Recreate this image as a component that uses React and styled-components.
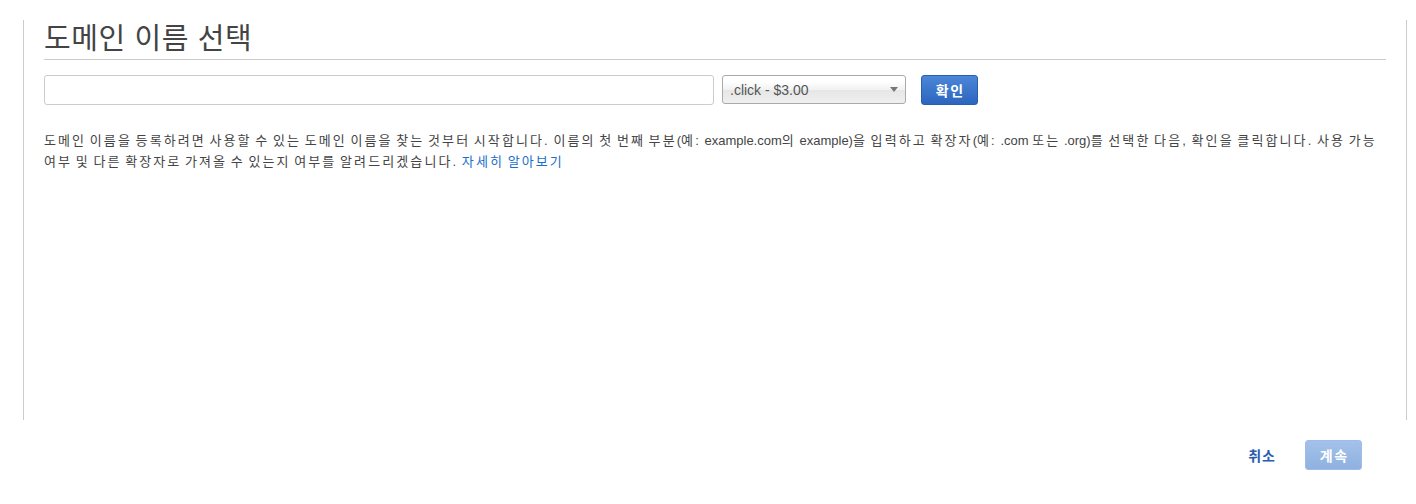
import React from "react";
import styled, { createGlobalStyle } from "styled-components";

const Global = createGlobalStyle`
  html, body { margin: 0; padding: 0; background: #fff; }
  body {
    font-family: Arial, "Liberation Sans", "Noto Sans CJK KR", sans-serif;
    color: #444;
  }
`;

const Page = styled.div`
  width: 1416px;
  height: 504px;
  padding-top: 20px;
  box-sizing: border-box;
`;

const Panel = styled.section`
  margin-left: 23px;
  width: 1384px;
  height: 400px;
  box-sizing: border-box;
  border-left: 1px solid #ccc;
  border-right: 1px solid #ccc;
  padding: 0 20px;
`;

const Title = styled.h1`
  margin: 0;
  font-size: 29px;
  font-weight: normal;
  line-height: 38px;
  letter-spacing: 0.6px;
  color: #444;
  padding-bottom: 1px;
  border-bottom: 1px solid #ccc;
`;

const SearchRow = styled.div`
  display: flex;
  align-items: flex-start;
  margin-top: 15px;
`;

const TextInput = styled.input`
  width: 670px;
  height: 30px;
  box-sizing: border-box;
  border: 1px solid #ccc;
  border-radius: 3px;
  padding: 0 6px;
  font-size: 13px;
  outline: none;
`;

const SelectBox = styled.div`
  position: relative;
  margin-left: 8px;
  width: 184px;
  height: 29px;
  box-sizing: border-box;
  border: 1px solid #aaa;
  border-radius: 3px;
  background: linear-gradient(#fff 20%, #f2f2f2 50%, #e6e6e6 52%, #f0f0f0 100%);
  display: flex;
  align-items: center;
  padding-left: 7px;
  font-size: 14px;
  color: #555;
`;

const Arrow = styled.span`
  position: absolute;
  right: 7px;
  top: 11px;
  width: 0;
  height: 0;
  border-left: 4px solid transparent;
  border-right: 4px solid transparent;
  border-top: 5px solid #777;
`;

const Button = styled.button`
  height: 30px;
  width: 57px;
  box-sizing: border-box;
  border: 1px solid ${(p) => (p.$disabled ? "#9fbde6" : "#2a5eb0")};
  border-radius: 3px;
  background: ${(p) =>
    p.$disabled
      ? "linear-gradient(#a3c2ea, #8fb1e0)"
      : "linear-gradient(#4b86d8, #2c65bf)"};
  color: #fff;
  font-family: Arial, "Liberation Sans", "Noto Sans CJK KR", sans-serif;
  font-size: 14px;
  font-weight: bold;
  letter-spacing: 1.5px;
  text-indent: 1.5px;
  padding: 0;
  margin-left: ${(p) => p.$ml || 0}px;
  cursor: pointer;
`;

const Description = styled.p`
  margin: 25px 0 0;
  font-size: 13px;
  line-height: 21px;
  letter-spacing: 2.1px;
  word-spacing: -2.1px;
  color: #444;
`;

const Latin = styled.span`
  letter-spacing: 0;
`;

const Link = styled.a`
  color: #1a6fc9;
  text-decoration: none;
`;

const Footer = styled.div`
  display: flex;
  justify-content: flex-end;
  align-items: center;
  padding: 20px 54px 0 0;
`;

const TextButton = styled.a`
  color: #2a5db0;
  font-size: 14px;
  font-weight: bold;
  letter-spacing: 1px;
  margin-right: 29px;
  text-decoration: none;
`;

export default function App() {
  return (
    <>
      <Global />
      <Page>
        <Panel>
          <Title>도메인 이름 선택</Title>
          <SearchRow>
            <TextInput type="text" />
            <SelectBox>
              .click - $3.00
              <Arrow />
            </SelectBox>
            <Button $ml={15}>확인</Button>
          </SearchRow>
          <Description>
            도메인 이름을 등록하려면 사용할 수 있는 도메인 이름을 찾는 것부터 시작합니다. 이름의 첫 번째 부분<Latin>(</Latin>예: <Latin>example.com</Latin>의 <Latin>example)</Latin>을 입력하고 확장자<Latin>(</Latin>예: <Latin>.com</Latin> 또는 <Latin>.org)</Latin>를 선택한 다음, 확인을 클릭합니다. 사용 가능 여부 및 다른 확장자로 가져올 수 있는지 여부를 알려드리겠습니다.{" "}
            <Link href="#">자세히 알아보기</Link>
          </Description>
        </Panel>
        <Footer>
          <TextButton href="#">취소</TextButton>
          <Button $disabled>계속</Button>
        </Footer>
      </Page>
    </>
  );
}
